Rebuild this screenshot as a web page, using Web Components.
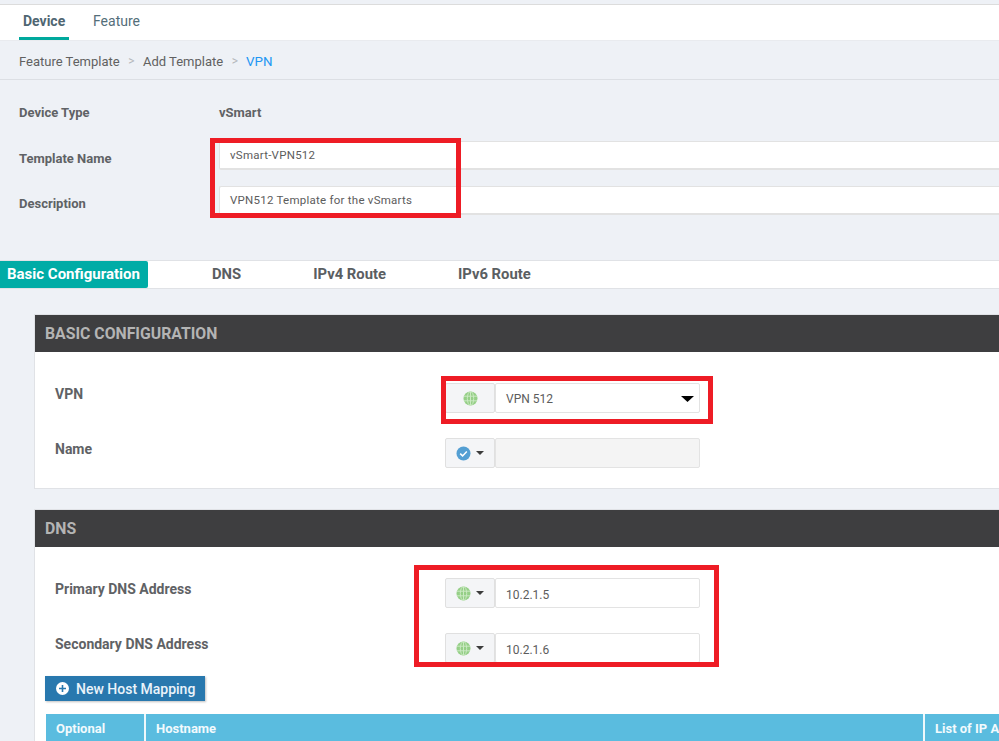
<!DOCTYPE html>
<html><head><meta charset="utf-8">
<style>
html,body{margin:0;padding:0;height:741px;overflow:hidden;background:#eef1f6;font-family:Roboto,"Liberation Sans",sans-serif;}
#page{position:relative;width:999px;height:741px;overflow:hidden;display:block}
</style></head><body>
<div id="page">
<x-top-tabs></x-top-tabs>
<x-crumbs></x-crumbs>
<x-meta></x-meta>
<x-sub-tabs></x-sub-tabs>
<x-card heading="BASIC CONFIGURATION" style="height:175px;margin-top:25px;margin-bottom:20px">
  <x-field label="VPN" icon="globe" value="VPN 512" select style="margin-top:31px"></x-field>
  <x-field label="Name" icon="check" caret disabled style="margin-top:25px"></x-field>
</x-card>
<x-card heading="DNS">
  <x-field label="Primary DNS Address" icon="globe" caret value="10.2.1.5" style="margin-top:31px"></x-field>
  <x-field label="Secondary DNS Address" icon="globe" caret value="10.2.1.6" style="margin-top:25px"></x-field>
  <x-add-button style="margin-top:13px">New Host Mapping</x-add-button>
  <x-table-head style="margin-top:13px"></x-table-head>
</x-card>
<x-red style="left:210px;top:138px;width:251px;height:80px"></x-red>
<x-red style="left:441px;top:376px;width:272px;height:48px"></x-red>
<x-red style="left:414px;top:565px;width:305px;height:102px"></x-red>
</div>
<script>
const def=(name,css,html)=>{
  customElements.define(name,class extends HTMLElement{
    connectedCallback(){
      if(this.shadowRoot)return;
      const r=this.attachShadow({mode:'open'});
      r.innerHTML='<style>'+css+'</style>'+(typeof html==='function'?html(this):html);
    }
  });
};
const globe=`<svg width="15" height="15" viewBox="0 0 15 15"><circle cx="7.5" cy="7.5" r="7" fill="#95cf87"/><g stroke="#cbe9c3" stroke-width="1" fill="none"><ellipse cx="7.5" cy="7.5" rx="3.2" ry="7"/><path d="M7.5.5v14M1 5.2h13M1 9.8h13"/></g></svg>`;
const check=`<svg width="15" height="15" viewBox="0 0 15 15"><circle cx="7.5" cy="7.5" r="7" fill="#549fd3"/><path d="M4.2 7.6l2.4 2.3 4.2-4.4" fill="none" stroke="#fff" stroke-width="1.5"/></svg>`;
const caret=`<svg width="8" height="4" viewBox="0 0 8 4"><path d="M0 0h8L4 4z" fill="#3c3c3c"/></svg>`;

def('x-top-tabs',`:host{display:flex;height:35px;margin-top:4px;background:#fff;border-top:1px solid #dcdcdc;padding-left:19px;gap:24px;font-size:14px}
.t{line-height:33px;color:#546e7a;height:35px;box-sizing:border-box}
.a{font-weight:700;border-bottom:3px solid #00a99d;width:50px;color:#4f6672;padding-left:4px}`,`<div class="t a">Device</div><div class="t">Feature</div>`);

def('x-crumbs',`:host{display:flex;align-items:center;padding:2px 0 0 19px;font-size:13px;color:#616161;border-bottom:1px solid #dcdfe4;border-top:1px solid #e9ebef;height:36px}
i{font-style:normal;color:#b5b8bc;margin:0 8.5px;font-size:12px}i.n{margin-right:8px}b{font-weight:400;color:#2196f3;font-size:13.4px}`,
`<span>Feature Template</span><i>&gt;</i><span>Add Template</span><i class="n">&gt;</i><b>VPN</b>`);

def('x-meta',`:host{display:block;height:180px;box-sizing:border-box;padding:24px 0 0 19px;font-size:13px;color:#5f6265;font-weight:700;line-height:18px}
.r{display:flex;align-items:flex-start;margin-bottom:16px}
.top{margin-bottom:19px}
.l{width:200px;flex:none}
.o .l{margin-top:9px}
.i{flex:none;width:800px;height:29px;box-sizing:border-box;background:#fff;border:1px solid #e2e2e2;border-bottom-width:2px;border-right:0;border-radius:2px;padding-left:10px;line-height:27px;font-weight:400;font-size:11.5px;color:#5c5c5c;letter-spacing:.25px}`,
`<div class="r top"><div class="l">Device Type</div><div>vSmart</div></div>
<div class="r o"><div class="l">Template Name</div><div class="i">vSmart-VPN512</div></div>
<div class="r o"><div class="l">Description</div><div class="i">VPN512 Template for the vSmarts</div></div>`);

def('x-sub-tabs',`:host{display:flex;height:29px;box-sizing:border-box;background:#fff;border-top:1px solid #e0e2e6;border-bottom:1px solid #e0e2e6;font-size:14.8px;font-weight:700;color:#5a5e62;align-items:flex-start;line-height:27px}
.a{background:#00aca6;color:#fff;width:148px;height:27px;box-sizing:border-box;border-radius:0 2px 2px 0;padding-left:7px;flex:none;font-size:15px}`,
`<div class="a">Basic Configuration</div><div style="margin-left:64px">DNS</div><div style="margin-left:72px">IPv4 Route</div><div style="margin-left:72px">IPv6 Route</div>`);

def('x-card',`:host{display:block;margin-left:34px;width:1000px;background:#fff;border:1px solid #e0e2e6;border-right:0;box-sizing:border-box}
h2{margin:0;height:37px;background:#3e3e40;color:#b4b4b4;font-size:15.8px;font-weight:700;line-height:37px;padding-left:10px}`,
e=>`<h2>${e.getAttribute('heading')}</h2><div><slot></slot></div>`);

def('x-field',`:host{display:flex;height:30px;padding-left:20px;font-size:14px}
.l{width:390px;flex:none;font-weight:700;color:#5f6265;line-height:22px}
.s{width:50px;height:30px;box-sizing:border-box;background:#f4f5f7;border:1px solid #e0e0e0;border-radius:2px;display:flex;align-items:center;justify-content:center;gap:5px}
.v{width:205px;height:30px;box-sizing:border-box;border:1px solid #e3e3e3;border-radius:2px;background:#fff;padding-left:10px;line-height:30px;font-size:12px;color:#5c5c5c;position:relative}
.t{display:block;padding-top:1px}
.sel .t{padding-top:0}
.d{background:#f4f4f4}
.v svg{position:absolute;right:5px;top:12px}`,
e=>`<div class="l">${e.getAttribute('label')}</div><div class="s">${e.getAttribute('icon')==='globe'?globe:check}${e.hasAttribute('caret')?caret:''}</div><div class="v ${e.hasAttribute('disabled')?'d':''} ${e.hasAttribute('select')?'sel':''}"><span class="t">${e.getAttribute('value')||''}</span>${e.hasAttribute('select')?'<svg width="13" height="6" viewBox="0 0 13 6"><path d="M0 0h13L6.5 6z" fill="#000"/></svg>':''}</div>`);

def('x-add-button',`:host{display:flex;align-items:center;width:160px;height:25px;margin-left:10px;background:#2878ae;color:#eaf3fa;font-size:14px;font-weight:500;box-shadow:1px 1px 2px rgba(0,0,0,.25);box-sizing:border-box;padding-left:11px;gap:7px}`,
`<svg width="13" height="13" viewBox="0 0 13 13"><circle cx="6.5" cy="6.5" r="6.5" fill="#fff"/><path d="M6.5 3v7M3 6.5h7" stroke="#2878ae" stroke-width="1.6"/></svg><slot></slot>`);

def('x-table-head',`:host{display:flex;height:30px;margin-left:11px;background:#5abcdf;color:#f2fafd;font-size:13px;font-weight:700;line-height:29px}
div{box-sizing:border-box;padding-left:10px;border-right:2px solid #eef8fb;flex:none}`,
`<div style="width:100px">Optional</div><div style="width:779px">Hostname</div><div style="width:200px;border:0">List of IP Addresses</div>`);

def('x-red',`:host{position:absolute;display:block;box-sizing:border-box;border:5px solid #ee1c25}`,``);
</script>
</body></html>
